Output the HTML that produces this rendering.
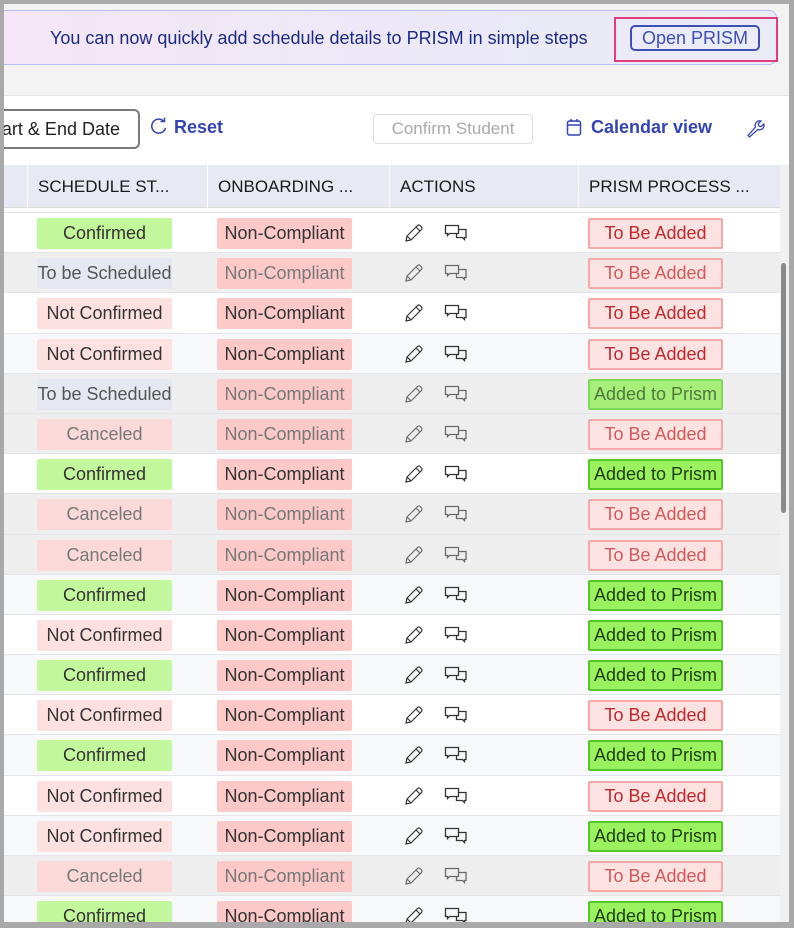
<!DOCTYPE html>
<html><head><meta charset="utf-8"><style>
*{box-sizing:border-box;margin:0;padding:0}
body{width:794px;height:928px;overflow:hidden;background:#f3f3f3;font-family:"Liberation Sans",sans-serif;position:relative}
.frame{position:absolute;inset:0;border-left:4px solid #a9a9a9;border-top:4px solid #a9a9a9;border-right:5px solid #a9a9a9;pointer-events:none;z-index:10}
.bottom{position:absolute;left:0;top:922px;width:794px;height:6px;background:#a9a9a9;z-index:10}
.banner{position:absolute;left:0;top:10px;width:777px;height:55px;border:1px solid #b8bdf2;border-left:none;border-radius:0 8px 8px 0;background:linear-gradient(90deg,#f4e6f6,#ebe9f7 60%,#e9ecf5)}
.banner .t{position:absolute;left:50px;top:17px;font-size:18px;color:#1e2a80}
.hl{position:absolute;left:614px;top:17px;width:164px;height:45px;border:2px solid #e23d78}
.btn{position:absolute;left:630px;top:25px;width:130px;height:26px;border:2px solid #3f4fb5;border-radius:5px;color:#3f4fb5;font-size:18px;text-align:center;line-height:22px}
.card{position:absolute;left:0;top:95px;width:790px;height:830px;background:#fff;border-top:1px solid #e6e6e6}
.date{position:absolute;left:-10px;top:109px;width:150px;height:40px;border:2px solid #7a7a7a;border-radius:6px;font-size:18px;color:#222;line-height:36px;text-align:right;padding-right:18px;white-space:nowrap;overflow:hidden}
.reset{position:absolute;left:150px;top:117px;font-size:18px;color:#3444b0;font-weight:bold}
.cs{position:absolute;left:373px;top:114px;width:160px;height:30px;border:1px solid #ddd;border-radius:4px;color:#aaa;font-size:17px;text-align:center;line-height:28px}
.cal{position:absolute;left:566px;top:117px;font-size:18px;color:#3444b0;font-weight:bold}
.head{position:absolute;left:4px;top:165px;width:776px;height:43px;background:#e8eaf3;border-bottom:1px solid #ddd}
.head div{position:absolute;top:0;height:43px;line-height:43px;font-size:17px;color:#1a1a1a;padding-left:10px;border-left:1px solid #fff}
.rows{position:absolute;left:4px;top:212px;width:776px;height:710px;overflow:hidden}
.r{height:40.2px;position:relative;border-top:1px solid #e4e5ea}
.b{position:absolute;top:5px;height:31px;width:135px;text-align:center;line-height:31px;font-size:18px;color:#333;white-space:nowrap;border-radius:2px}
.s{left:33px}.o{left:213px;background:#fcc8c8}.p{left:584px;border:2px solid #f8a8a8;background:#fde2e2;color:#c0282d;line-height:27px}
.conf{background:#c2f79c}.nc{background:#fde0e0}.ts{background:#e5e8f1;color:#555}.ca{background:#fcd9d9;color:#777}
.ad{background:#99f25e;border-color:#55c72a;color:#1f3d12}
.f{background:#eeeeee}.f .o{color:#777}.f .p{color:#d05a5a}.f .ad{background:#a8ef7a;border-color:#7fd95a;color:#4f7a3f}
.st{background:#f7f8fa}
.pe{position:absolute;left:400px;top:10px}.ch{position:absolute;left:440px;top:11px}
.sb{position:absolute;left:780px;top:165px;width:9px;height:757px;background:#f0f0f0}
.th{position:absolute;left:781px;top:263px;width:5px;height:250px;background:#8a8a8a;border-radius:3px}
</style></head><body>
<svg width="0" height="0" style="position:absolute"><defs>
<symbol id="pen" viewBox="0 0 20 20"><path d="M2 18l1-5L13.5 2.5a1.8 1.8 0 0 1 2.5 0l1.5 1.5a1.8 1.8 0 0 1 0 2.5L7 17zM12 4l4 4M3 13l4 4" fill="none" stroke="#333" stroke-width="1.2"/></symbol>
<symbol id="chat" viewBox="0 0 24 20"><path d="M1.5 1.5h13v8h-9l-2 2v-2h-2z" fill="none" stroke="#333" stroke-width="1.3"/><path d="M14.5 5.5h7.5v8h-1.5v2l-2-2h-6v-4" fill="none" stroke="#333" stroke-width="1.3"/></symbol>
</defs></svg>
<div class="banner"><div class="t">You can now quickly add schedule details to PRISM in simple steps</div></div>
<div class="hl"></div><div class="btn">Open PRISM</div>
<div class="card"></div>
<div class="date">tart &amp; End Date</div>
<div class="reset"><svg width="18" height="18" viewBox="0 0 18 18" style="vertical-align:-2px;margin-right:6px"><path d="M14 4.5A7 7 0 1 0 15.5 11" fill="none" stroke="#3444b0" stroke-width="1.5"/><path d="M10.5 4.5H14.5V0.8" fill="none" stroke="#3444b0" stroke-width="1.5"/></svg>Reset</div>
<div class="cs">Confirm Student</div>
<div class="cal"><svg width="16" height="18" viewBox="0 0 16 18" style="vertical-align:-3px;margin-right:9px"><rect x="1.5" y="3" width="13" height="14" rx="2" fill="none" stroke="#3444b0" stroke-width="1.5"/><path d="M1.5 7H14.5M5 1v3M11 1v3" stroke="#3444b0" stroke-width="1.5"/></svg>Calendar view</div>
<svg style="position:absolute;left:745px;top:118px" width="20" height="20" viewBox="0 0 20 20"><path d="M3 17.5l7.5-8.5a4.5 4.5 0 0 1 5.5-6l-2.8 2.8.6 2.2 2.2.6L18.8 6a4.5 4.5 0 0 1-6 5.5L4.5 19z" fill="none" stroke="#3444b0" stroke-width="1.3"/></svg>
<div class="head"><div style="left:0;width:23px;border:none"></div><div style="left:23px;width:180px">SCHEDULE ST...</div><div style="left:203px;width:182px">ONBOARDING ...</div><div style="left:385px;width:189px">ACTIONS</div><div style="left:574px;width:202px">PRISM PROCESS ...</div></div>
<div class="rows">
<div class="r"><div class="b s conf">Confirmed</div><div class="b o">Non-Compliant</div><svg class="pe" width="20" height="20"><use href="#pen"/></svg><svg class="ch" width="24" height="20"><use href="#chat"/></svg><div class="b p">To Be Added</div></div>
<div class="r f"><div class="b s ts">To be Scheduled</div><div class="b o">Non-Compliant</div><svg class="pe" width="20" height="20" opacity=".7"><use href="#pen"/></svg><svg class="ch" width="24" height="20" opacity=".7"><use href="#chat"/></svg><div class="b p">To Be Added</div></div>
<div class="r"><div class="b s nc">Not Confirmed</div><div class="b o">Non-Compliant</div><svg class="pe" width="20" height="20"><use href="#pen"/></svg><svg class="ch" width="24" height="20"><use href="#chat"/></svg><div class="b p">To Be Added</div></div>
<div class="r st"><div class="b s nc">Not Confirmed</div><div class="b o">Non-Compliant</div><svg class="pe" width="20" height="20"><use href="#pen"/></svg><svg class="ch" width="24" height="20"><use href="#chat"/></svg><div class="b p">To Be Added</div></div>
<div class="r f"><div class="b s ts">To be Scheduled</div><div class="b o">Non-Compliant</div><svg class="pe" width="20" height="20" opacity=".7"><use href="#pen"/></svg><svg class="ch" width="24" height="20" opacity=".7"><use href="#chat"/></svg><div class="b p ad">Added to Prism</div></div>
<div class="r f"><div class="b s ca">Canceled</div><div class="b o">Non-Compliant</div><svg class="pe" width="20" height="20" opacity=".7"><use href="#pen"/></svg><svg class="ch" width="24" height="20" opacity=".7"><use href="#chat"/></svg><div class="b p">To Be Added</div></div>
<div class="r"><div class="b s conf">Confirmed</div><div class="b o">Non-Compliant</div><svg class="pe" width="20" height="20"><use href="#pen"/></svg><svg class="ch" width="24" height="20"><use href="#chat"/></svg><div class="b p ad">Added to Prism</div></div>
<div class="r f"><div class="b s ca">Canceled</div><div class="b o">Non-Compliant</div><svg class="pe" width="20" height="20" opacity=".7"><use href="#pen"/></svg><svg class="ch" width="24" height="20" opacity=".7"><use href="#chat"/></svg><div class="b p">To Be Added</div></div>
<div class="r f"><div class="b s ca">Canceled</div><div class="b o">Non-Compliant</div><svg class="pe" width="20" height="20" opacity=".7"><use href="#pen"/></svg><svg class="ch" width="24" height="20" opacity=".7"><use href="#chat"/></svg><div class="b p">To Be Added</div></div>
<div class="r st"><div class="b s conf">Confirmed</div><div class="b o">Non-Compliant</div><svg class="pe" width="20" height="20"><use href="#pen"/></svg><svg class="ch" width="24" height="20"><use href="#chat"/></svg><div class="b p ad">Added to Prism</div></div>
<div class="r"><div class="b s nc">Not Confirmed</div><div class="b o">Non-Compliant</div><svg class="pe" width="20" height="20"><use href="#pen"/></svg><svg class="ch" width="24" height="20"><use href="#chat"/></svg><div class="b p ad">Added to Prism</div></div>
<div class="r st"><div class="b s conf">Confirmed</div><div class="b o">Non-Compliant</div><svg class="pe" width="20" height="20"><use href="#pen"/></svg><svg class="ch" width="24" height="20"><use href="#chat"/></svg><div class="b p ad">Added to Prism</div></div>
<div class="r"><div class="b s nc">Not Confirmed</div><div class="b o">Non-Compliant</div><svg class="pe" width="20" height="20"><use href="#pen"/></svg><svg class="ch" width="24" height="20"><use href="#chat"/></svg><div class="b p">To Be Added</div></div>
<div class="r st"><div class="b s conf">Confirmed</div><div class="b o">Non-Compliant</div><svg class="pe" width="20" height="20"><use href="#pen"/></svg><svg class="ch" width="24" height="20"><use href="#chat"/></svg><div class="b p ad">Added to Prism</div></div>
<div class="r"><div class="b s nc">Not Confirmed</div><div class="b o">Non-Compliant</div><svg class="pe" width="20" height="20"><use href="#pen"/></svg><svg class="ch" width="24" height="20"><use href="#chat"/></svg><div class="b p">To Be Added</div></div>
<div class="r st"><div class="b s nc">Not Confirmed</div><div class="b o">Non-Compliant</div><svg class="pe" width="20" height="20"><use href="#pen"/></svg><svg class="ch" width="24" height="20"><use href="#chat"/></svg><div class="b p ad">Added to Prism</div></div>
<div class="r f"><div class="b s ca">Canceled</div><div class="b o">Non-Compliant</div><svg class="pe" width="20" height="20" opacity=".7"><use href="#pen"/></svg><svg class="ch" width="24" height="20" opacity=".7"><use href="#chat"/></svg><div class="b p">To Be Added</div></div>
<div class="r st"><div class="b s conf">Confirmed</div><div class="b o">Non-Compliant</div><svg class="pe" width="20" height="20"><use href="#pen"/></svg><svg class="ch" width="24" height="20"><use href="#chat"/></svg><div class="b p ad">Added to Prism</div></div>
</div>
<div class="sb"></div><div class="th"></div>
<div class="frame"></div><div class="bottom"></div>
</body></html>
